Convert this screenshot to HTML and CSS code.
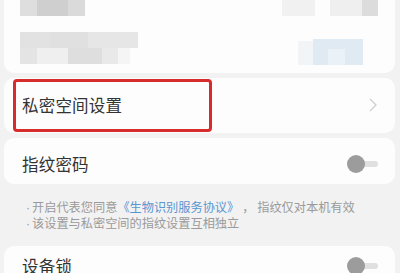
FILE: index.html
```html
<!DOCTYPE html>
<html lang="zh">
<head>
<meta charset="utf-8">
<link rel="stylesheet" href="styles.css">
</head>
<body>
<div class="page">
  <div class="card top">
    <div class="mrow r1">
      <div class="grp">
        <span class="px" style="width:17px;background:#dedede"></span>
        <span class="px" style="width:31px;background:#cfcfcf"></span>
        <span class="px" style="width:17px;background:#dadada"></span>
      </div>
      <div class="grp right">
        <span class="px" style="width:33px;background:#f1f1f1"></span>
        <span class="gap15"></span>
        <span class="px" style="width:32px;background:#efefef"></span>
        <span class="px" style="width:16px;background:#dcdcdc"></span>
      </div>
    </div>
    <div class="mrow r2">
      <div class="col">
        <div class="grp">
          <span class="px" style="width:30px;background:#e2e2e2"></span>
          <span class="px" style="width:38px;background:#e0e0e0"></span>
          <span class="px" style="width:50px;background:#e6e6e6"></span>
        </div>
        <div class="grp">
          <span class="px" style="width:17px;background:#e4e4e4"></span>
          <span class="px" style="width:31px;background:#efefef"></span>
          <span class="px" style="width:34px;background:#dedede"></span>
          <span class="px" style="width:16px;background:#e9e9e9"></span>
          <span class="px" style="width:12px;background:#f5f5f5"></span>
        </div>
      </div>
      <div class="grp right blue">
        <span class="px" style="width:15px;height:24px;background:#f1f5f8"></span>
        <span class="px bl" style="width:50px;height:26px;background:#dfeaf3"></span>
      </div>
    </div>
  </div>

  <div class="card row highlight">
    <span class="label">私密空间设置</span>
    <svg class="chev" width="8" height="14" viewBox="0 0 8 14"><path d="M1 1 L7 7 L1 13" fill="none" stroke="#cfcfcf" stroke-width="1.3"/></svg>
    <div class="redbox"></div>
  </div>

  <div class="card row fp">
    <span class="label">指纹密码</span>
    <span class="toggle"><span class="knob"></span></span>
  </div>

  <div class="notes">
    <p><span class="dot">·</span>开启代表您同意<span class="link">《生物识别服务协议》</span><span class="comma">，</span>指纹仅对本机有效</p>
    <p><span class="dot">·</span>该设置与私密空间的指纹设置互相独立</p>
  </div>

  <div class="card row lock">
    <span class="label">设备锁</span>
    <span class="toggle"><span class="knob"></span></span>
  </div>
</div>
</body>
</html>
```
FILE: styles.css
```css
* { box-sizing: border-box; margin: 0; padding: 0; }
html, body { width: 400px; height: 273px; overflow: hidden; }
body {
  background: #f2f2f2;
  font-family: "Noto Sans CJK SC", "Noto Sans", sans-serif;
  color: #333;
}
.page {
  display: flex;
  flex-direction: column;
  padding: 0 5px 0 4px;
}
.card {
  background: #fdfdfd;
  border-radius: 10px;
}
.top {
  height: 73px;
  border-radius: 0 0 10px 10px;
  padding: 0 17px 0 16px;
  display: flex;
  flex-direction: column;
  gap: 16px;
}
.mrow { display: flex; justify-content: space-between; align-items: flex-start; }
.grp { display: flex; }
.px { display: block; height: 16px; }
.gap15 { width: 15px; }
.r2 { height: 34px; }
.col { display: flex; flex-direction: column; }
.blue { align-items: flex-end; padding-top: 7px; margin-right: 15px; }
.bl { position: relative; }
.bl::after {
  content: ""; position: absolute; left: 15px; top: 10px; width: 17px; height: 16px; background: #eaf2f8;
}
.row {
  display: flex;
  align-items: center;
  justify-content: space-between;
  padding: 0 18px;
  position: relative;
}
.label { font-size: 16.5px; line-height: 20px; color: #333; letter-spacing: 0.2px; }
.highlight { margin-top: 5px; height: 55px; padding-bottom: 1px; }
.redbox {
  position: absolute;
  left: 9px; top: 1px;
  width: 199px; height: 53px;
  border: 3px solid #d62c2c;
  border-radius: 4px;
}
.fp { margin-top: 5px; height: 46px; padding-top: 5px; }
.lock { margin-top: 4px; height: 40px; padding-top: 0; }
.toggle {
  position: relative;
  width: 31px; height: 18px;
  display: flex; align-items: center;
  margin-right: -1px;
}
.toggle::before {
  content: ""; position: absolute; left: 9px; right: 0; top: 6px; height: 6px;
  background: #e0e0e0; border-radius: 3px;
}
.knob {
  position: relative;
  width: 18px; height: 18px; border-radius: 50%;
  background: #9c9c9c;
}
.notes {
  padding: 15px 0 0 22px;
  height: 58px;
  font-size: 12.2px;
  line-height: 16px;
  color: #9a9a9a;
}
.notes p { white-space: nowrap; height: 16px; }
.dot { font-family: "Liberation Sans", sans-serif; margin-right: 2px; }
.link { display: inline-block; height: 16px; line-height: 16px; vertical-align: top; color: #5b95d0; }
.comma { display: inline-block; height: 16px; line-height: 16px; vertical-align: top; width: 18px; text-align: center; }
```
